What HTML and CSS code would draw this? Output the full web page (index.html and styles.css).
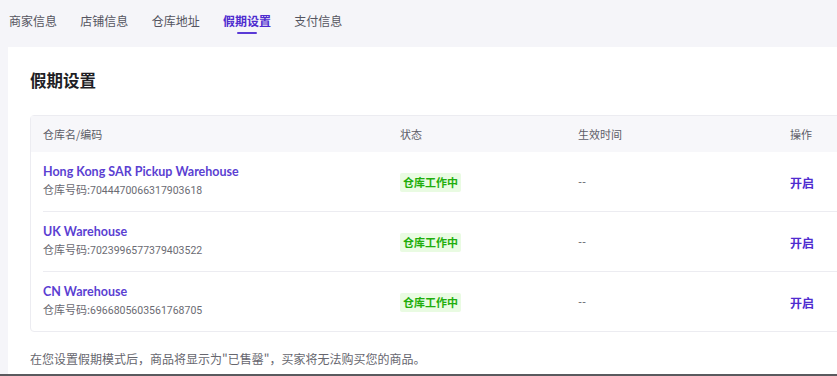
FILE: index.html
```html
<!DOCTYPE html>
<html lang="zh-CN">
<head>
<meta charset="utf-8">
<link rel="stylesheet" href="styles.css">
</head>
<body>
<div class="page">
  <nav class="tabs">
    <span class="tab">商家信息</span>
    <span class="tab">店铺信息</span>
    <span class="tab">仓库地址</span>
    <span class="tab active">假期设置</span>
    <span class="tab">支付信息</span>
  </nav>
  <section class="card">
    <h1 class="title">假期设置</h1>
    <div class="table">
      <div class="thead">
        <div class="cell">仓库名/编码</div>
        <div class="cell pad">状态</div>
        <div class="cell pad">生效时间</div>
        <div class="cell pad">操作</div>
      </div>
      <div class="row">
        <div class="cell">
          <div class="name">Hong Kong SAR Pickup Warehouse</div>
          <div class="code"><span class="code-label">仓库号码:</span>7044470066317903618</div>
        </div>
        <div class="cell pad"><span class="tag">仓库工作中</span></div>
        <div class="cell pad dash">--</div>
        <div class="cell pad"><span class="action">开启</span></div>
      </div>
      <div class="row">
        <div class="cell">
          <div class="name">UK Warehouse</div>
          <div class="code"><span class="code-label">仓库号码:</span>7023996577379403522</div>
        </div>
        <div class="cell pad"><span class="tag">仓库工作中</span></div>
        <div class="cell pad dash">--</div>
        <div class="cell pad"><span class="action">开启</span></div>
      </div>
      <div class="row">
        <div class="cell">
          <div class="name">CN Warehouse</div>
          <div class="code"><span class="code-label">仓库号码:</span>6966805603561768705</div>
        </div>
        <div class="cell pad"><span class="tag">仓库工作中</span></div>
        <div class="cell pad dash">--</div>
        <div class="cell pad"><span class="action">开启</span></div>
      </div>
    </div>
    <p class="note">在您设置假期模式后，商品将显示为"已售罄"，买家将无法购买您的商品。</p>
  </section>
  <div class="edge"></div>
</div>
</body>
</html>
```
FILE: styles.css
```css
html, body {
  margin: 0;
  padding: 0;
  overflow: hidden;
}
body {
  background: #f5f5f9;
  font-family: Lato, "Noto Sans CJK SC", sans-serif;
  color: #4a4a55;
}
.page {
  height: 376px;
  display: flex;
  flex-direction: column;
}
.tabs {
  height: 47px;
  display: flex;
  gap: 23.3px;
  padding-left: 9px;
  box-sizing: border-box;
  padding-top: 12px;
  font-family: "Noto Sans CJK SC", sans-serif;
}
.tab {
  font-size: 12px;
  line-height: 18px;
  color: #545460;
  position: relative;
  height: 22px;
}
.tab.active {
  color: #4e2ccf;
  font-weight: 700;
}
.tab.active::after {
  content: "";
  position: absolute;
  left: 14px;
  right: 14px;
  bottom: 0;
  height: 2px;
  border-radius: 1px;
  background: #5a3ad6;
}
.card {
  flex: 1;
  margin-left: 8px;
  width: 900px;
  background: #ffffff;
  padding: 21px 0 0 22px;
  box-sizing: border-box;
}
.title {
  margin: 0;
  font-family: "Noto Sans CJK SC", sans-serif;
  font-size: 16.5px;
  line-height: 24px;
  font-weight: 700;
  color: #1f1f26;
}
.table {
  margin-top: 23px;
  border: 1px solid #ececf1;
  border-radius: 4px;
  width: 847px;
  box-sizing: border-box;
}
.thead, .row {
  display: grid;
  grid-template-columns: 345px 178px 212px 1fr;
  align-items: center;
}
.thead {
  background: #f7f7fa;
  height: 36px;
  padding-left: 12px;
  box-sizing: border-box;
  font-family: "Noto Sans CJK SC", sans-serif;
  font-size: 11px;
  color: #5d5d68;
}
.row {
  margin-left: 12px;
  padding: 11px 0 11px;
}
.row + .row {
  border-top: 1px solid #ececf1;
}
.cell.pad {
  padding-left: 12px;
}
.name {
  font-size: 12.5px;
  line-height: 18px;
  height: 18px;
  font-weight: 700;
  color: #5b3fd2;
}
.code {
  margin-top: 1px;
  height: 18px;
  font-family: Roboto, "Noto Sans CJK SC", sans-serif;
  font-size: 10.5px;
  line-height: 18px;
  color: #6b6b73;
}
.code-label {
  font-family: "Noto Sans CJK SC", sans-serif;
  font-size: 11px;
  line-height: 11px;
}
.tag {
  display: inline-block;
  font-family: "Noto Sans CJK SC", sans-serif;
  font-size: 11px;
  line-height: 19px;
  font-weight: 700;
  color: #1fae0c;
  background: #e9fbe2;
  padding: 0 3px;
  border-radius: 2px;
}
.dash {
  font-size: 11px;
  color: #6b6b73;
}
.action {
  font-family: "Noto Sans CJK SC", sans-serif;
  font-size: 12px;
  font-weight: 700;
  color: #4f2ccf;
}
.note {
  margin: 18px 0 0;
  font-family: "Noto Sans CJK SC", sans-serif;
  font-size: 12px;
  line-height: 18px;
  color: #66666e;
}
.edge {
  height: 2px;
  background: #5a5a5e;
}
```
